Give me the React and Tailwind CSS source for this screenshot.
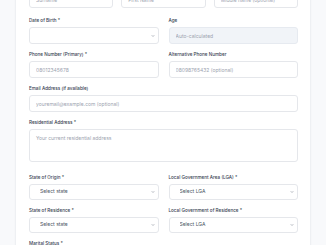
import React from 'react';

const Label = ({ children }) => (
    <label className="block text-[4.6px] leading-[6px] font-medium text-[#374151] mb-[3px]">{children}</label>
);

const TextInput = ({ placeholder, readOnly }) => (
    <input
        type="text"
        readOnly={readOnly}
        placeholder={placeholder}
        className={
            'block w-full h-[17px] rounded-[3px] border px-[6px] text-[5px] outline-none placeholder:text-[#9ca3af] ' +
            (readOnly ? 'bg-[#f1f4f8] border-[#e6eaf0]' : 'bg-white border-[#e5e7eb]')
        }
    />
);

const Chevron = () => (
    <svg className="absolute right-[4px] top-1/2 -translate-y-1/2" width="4" height="4" viewBox="0 0 24 24" fill="none" stroke="#6b7280" strokeWidth="3" strokeLinecap="round" strokeLinejoin="round">
        <path d="m6 9 6 6 6-6" />
    </svg>
);

const Select = ({ value }) => (
    <div className="relative">
        <select className="block w-full h-[16px] appearance-none rounded-[3px] border border-[#e5e7eb] bg-white pl-[10px] pr-[10px] text-[5px] text-[#4b5563] outline-none">
            <option>{value}</option>
        </select>
        <Chevron />
    </div>
);

const Field = ({ label, children }) => (
    <div>
        <Label>{label}</Label>
        {children}
    </div>
);

export default function App() {
    return (
        <div className="min-h-screen bg-[#f8f9fb] overflow-hidden" style={{ fontFamily: 'Inter, "Noto Sans", sans-serif' }}>
            <div className="ml-[15px] w-[296px] -mt-[40px] pt-[21px] pb-[20px] pl-[13px] pr-[12px] bg-white border border-[#eef0f3] shadow-[0_1px_2px_rgba(0,0,0,0.03)]">
                <div className="grid grid-cols-3 gap-x-[8px]">
                    <Field label="Surname *"><TextInput placeholder="Surname" /></Field>
                    <Field label="First Name *"><TextInput placeholder="First Name" /></Field>
                    <Field label="Middle Name"><TextInput placeholder="Middle name (optional)" /></Field>
                </div>

                <div className="grid grid-cols-2 gap-x-[10px] mt-[10px]">
                    <Field label="Date of Birth *">
                        <div className="relative">
                            <input type="text" className="block w-full h-[17px] rounded-[3px] border border-[#e5e7eb] bg-white outline-none" />
                            <Chevron />
                        </div>
                    </Field>
                    <Field label="Age"><TextInput placeholder="Auto-calculated" readOnly /></Field>
                </div>

                <div className="grid grid-cols-2 gap-x-[10px] mt-[8px]">
                    <Field label="Phone Number (Primary) *"><TextInput placeholder="08012345678" /></Field>
                    <Field label="Alternative Phone Number"><TextInput placeholder="08098765432 (optional)" /></Field>
                </div>

                <div className="mt-[8px]">
                    <Field label="Email Address (if available)"><TextInput placeholder="youremail@example.com (optional)" /></Field>
                </div>

                <div className="mt-[8px]">
                    <Field label="Residential Address *">
                        <textarea
                            placeholder="Your current residential address"
                            className="block w-full h-[33px] resize-none rounded-[3px] border border-[#e5e7eb] bg-white px-[6px] py-[5px] text-[5px] leading-[6px] outline-none placeholder:text-[#9ca3af]"
                        />
                    </Field>
                </div>

                <div className="grid grid-cols-2 gap-x-[10px] mt-[13px]">
                    <Field label="State of Origin *"><Select value="Select state" /></Field>
                    <Field label="Local Government Area (LGA) *"><Select value="Select LGA" /></Field>
                </div>

                <div className="grid grid-cols-2 gap-x-[10px] mt-[8px]">
                    <Field label="State of Residence *"><Select value="Select state" /></Field>
                    <Field label="Local Government of Residence *"><Select value="Select LGA" /></Field>
                </div>

                <div className="mt-[8px]">
                    <Field label="Marital Status *"><Select value="Select status" /></Field>
                </div>
            </div>
        </div>
    );
}
